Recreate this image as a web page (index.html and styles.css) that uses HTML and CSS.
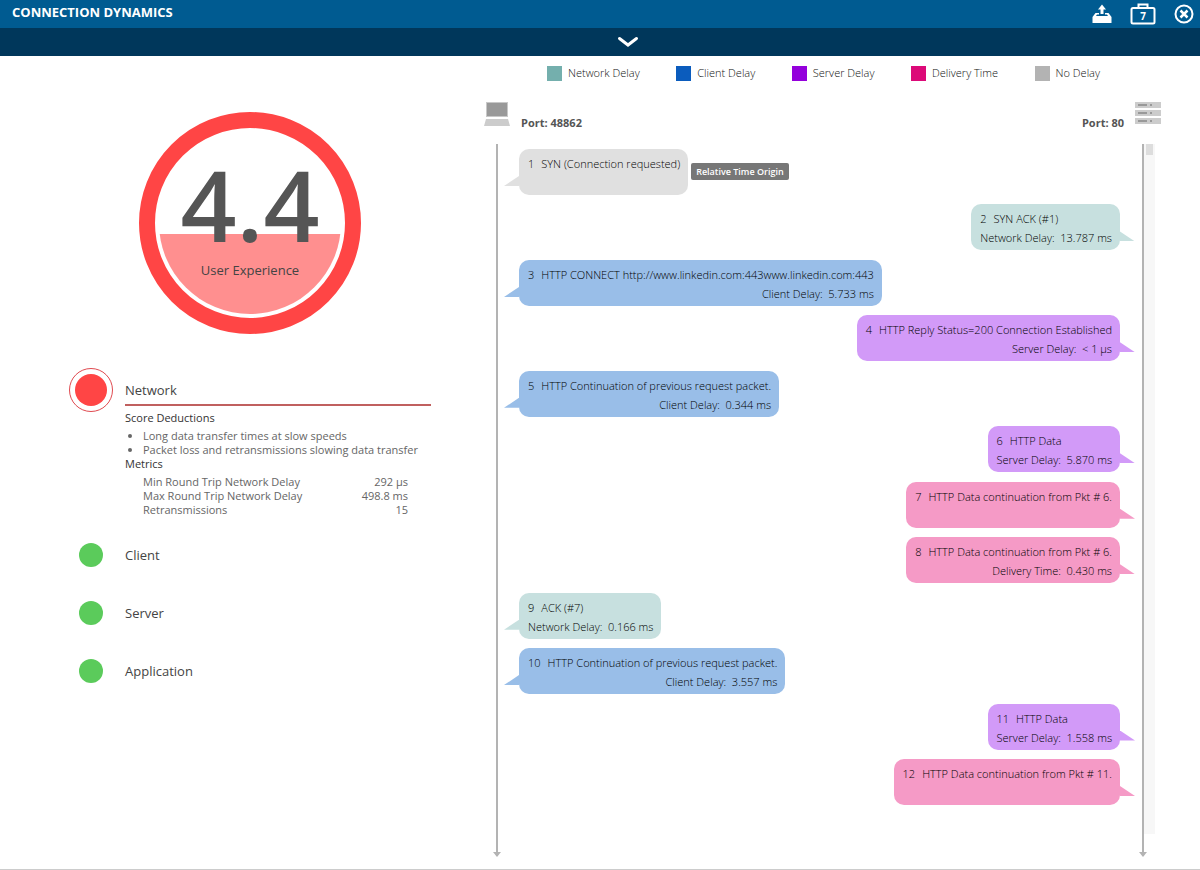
FILE: index.html
```
<!DOCTYPE html>
<html lang="en">
<head>
    <meta charset="UTF-8">
    <meta name="viewport" content="width=device-width, initial-scale=1.0">
    <title>Connection Dynamics</title>
    <link rel="stylesheet" href="styles.css">
</head>
<body>
    <header class="topbar">
        <h1>CONNECTION DYNAMICS</h1>
        <div class="actions">
            <button type="button" aria-label="Export">
                <svg width="20" height="20" viewBox="0 0 20 20">
                    <path d="M10 0.500 L14 5.500 H11.500 V10 H8.500 V5.500 H6 Z" fill="#fff"/>
                    <path d="M3.500 9 H7 V10.500 H5 L4 12 H16 L15 10.500 H13 V9 H16.500 L19.500 13 V19 H0.500 V13 Z" fill="#fff"/>
                </svg>
            </button>
            <button type="button" class="packets" aria-label="Packets">
                <svg width="26" height="22" viewBox="0 0 26 22">
                    <rect x="1.500" y="5" width="23" height="15.500" rx="1.500" fill="none" stroke="#fff" stroke-width="2"/>
                    <path d="M8.500 5 V1.500 H17.500 V5" fill="none" stroke="#fff" stroke-width="2"/>
                </svg>
                <span>7</span>
            </button>
            <button type="button" aria-label="Close">
                <svg width="20" height="20" viewBox="0 0 20 20">
                    <circle cx="10" cy="10" r="8.500" fill="none" stroke="#fff" stroke-width="2"/>
                    <path d="M6.500 6.500 L13.500 13.500 M13.500 6.500 L6.500 13.500" stroke="#fff" stroke-width="2.500"/>
                </svg>
            </button>
        </div>
    </header>
    <div class="subbar">
        <button type="button" aria-label="Expand">
            <svg width="22" height="12" viewBox="0 0 22 12">
                <path d="M2.500 2.500 L11 9 L19.500 2.500" fill="none" stroke="#fff" stroke-width="3" stroke-linecap="round"/>
            </svg>
        </button>
    </div>

    <main>
        <section class="summary">
            <div class="gauge">
                <div class="gauge-fill">
                    <div class="score">4.4</div>
                    <div class="score-label">User Experience</div>
                </div>
            </div>

            <div class="category active">
                <span class="dot red"></span>
                <div class="details">
                    <h2>Network</h2>
                    <h3>Score Deductions</h3>
                    <ul>
                        <li>Long data transfer times at slow speeds</li>
                        <li>Packet loss and retransmissions slowing data transfer</li>
                    </ul>
                    <h3>Metrics</h3>
                    <table>
                        <tr><td>Min Round Trip Network Delay</td><td>292 µs</td></tr>
                        <tr><td>Max Round Trip Network Delay</td><td>498.8 ms</td></tr>
                        <tr><td>Retransmissions</td><td>15</td></tr>
                    </table>
                </div>
            </div>
            <div class="category"><span class="dot"></span><h2>Client</h2></div>
            <div class="category"><span class="dot"></span><h2>Server</h2></div>
            <div class="category"><span class="dot"></span><h2>Application</h2></div>
        </section>

        <section class="flow">
            <ul class="legend">
                <li><i class="key-network"></i>Network Delay</li>
                <li><i class="key-client"></i>Client Delay</li>
                <li><i class="key-server"></i>Server Delay</li>
                <li><i class="key-delivery"></i>Delivery Time</li>
                <li><i class="key-none"></i>No Delay</li>
            </ul>

            <div class="ports">
                <svg width="26" height="26" viewBox="0 0 26 26">
                    <rect x="2" y="1" width="22" height="15" fill="#c8c8c8"/>
                    <rect x="3" y="2" width="20" height="13" fill="#999"/>
                    <path d="M2 18 H24 L26 25 H0 Z" fill="#ccc"/>
                </svg>
                <span>Port: 48862</span>
                <span class="port-right">Port: 80</span>
                <svg width="26" height="26" viewBox="0 0 26 26">
                    <path d="M0 1 H26 V7 H0 Z M0 9 H26 V15 H0 Z M0 17 H26 V23 H0 Z" fill="#ccc"/>
                    <path d="M3 4 H12 M15 4 H17 M3 12 H12 M15 12 H17 M3 20 H12 M15 20 H17" stroke="#999" stroke-width="2"/>
                </svg>
            </div>

            <div class="timeline">
                <div class="rail"></div>
                <ol class="packets-list">
                    <li class="packet none"><p><b>1</b>SYN (Connection requested)</p><span class="origin">Relative Time Origin</span></li>
                    <li class="packet network right"><p><b>2</b>SYN ACK (#1)</p><p class="delay">Network Delay: &nbsp;13.787 ms</p></li>
                    <li class="packet client"><p><b>3</b>HTTP CONNECT http://www.linkedin.com:443www.linkedin.com:443</p><p class="delay">Client Delay: &nbsp;5.733 ms</p></li>
                    <li class="packet server right"><p><b>4</b>HTTP Reply Status=200 Connection Established</p><p class="delay">Server Delay: &nbsp;&lt; 1 µs</p></li>
                    <li class="packet client"><p><b>5</b>HTTP Continuation of previous request packet.</p><p class="delay">Client Delay: &nbsp;0.344 ms</p></li>
                    <li class="packet server right"><p><b>6</b>HTTP Data</p><p class="delay">Server Delay: &nbsp;5.870 ms</p></li>
                    <li class="packet delivery right"><p><b>7</b>HTTP Data continuation from Pkt # 6.</p></li>
                    <li class="packet delivery right"><p><b>8</b>HTTP Data continuation from Pkt # 6.</p><p class="delay">Delivery Time: &nbsp;0.430 ms</p></li>
                    <li class="packet network"><p><b>9</b>ACK (#7)</p><p class="delay">Network Delay: &nbsp;0.166 ms</p></li>
                    <li class="packet client"><p><b>10</b>HTTP Continuation of previous request packet.</p><p class="delay">Client Delay: &nbsp;3.557 ms</p></li>
                    <li class="packet server right"><p><b>11</b>HTTP Data</p><p class="delay">Server Delay: &nbsp;1.558 ms</p></li>
                    <li class="packet delivery right"><p><b>12</b>HTTP Data continuation from Pkt # 11.</p></li>
                </ol>
                <div class="rail"></div>
                <div class="scroll"><div class="thumb"></div></div>
            </div>
        </section>
    </main>
</body>
</html>
```
FILE: styles.css
```
* {
    box-sizing: border-box;
}
body {
    margin: 0;
    min-height: 100vh;
    display: flex;
    flex-direction: column;
    font-family: "Open Sans", sans-serif;
    color: #444;
    background-color: white;
}
h1, h2, h3, p, ul, ol {
    margin: 0;
    padding: 0;
}
ol, .legend {
    list-style: none;
}
button {
    display: flex;
    padding: 0;
    border: 0;
    background: none;
}
.topbar {
    display: flex;
    justify-content: space-between;
    align-items: center;
    height: 28px;
    padding: 0 6px 0 12px;
    background-color: #005b91;
}
.topbar h1 {
    font-size: 13px;
    line-height: 24px;
    padding-bottom: 4px;
    color: white;
}
.actions {
    display: flex;
    align-items: center;
    gap: 18px;
}
.packets {
    position: relative;
}
.packets span {
    position: absolute;
    top: 6px;
    left: 0;
    width: 100%;
    text-align: center;
    font: bold 10px/14px "Open Sans", sans-serif;
    color: white;
}
.subbar {
    display: flex;
    justify-content: center;
    align-items: center;
    height: 28px;
    padding-left: 56px;
    background-color: #00375b;
}
main {
    flex: 1;
    display: grid;
    grid-template-columns: 2fr 3fr;
    border-bottom: 1px solid #ccc;
}

/* left side */
.summary {
    padding: 56px 48px 0 69px;
}
.gauge {
    width: 222px;
    height: 222px;
    margin: 0 0 34px 70px;
    padding: 4px;
    border: 16px solid #ff4545;
    border-radius: 50%;
}
.gauge-fill {
    height: 100%;
    border-radius: 50%;
    text-align: center;
    background: linear-gradient(white 102px, #ff8f8f 102px);
    padding-top: 16px;
}
.score {
    font-size: 98px;
    font-weight: 600;
    line-height: 112px;
    color: #555;
}
.score-label {
    font-size: 13px;
    line-height: 20px;
}
.category {
    display: flex;
    align-items: center;
    gap: 12px;
    height: 44px;
    margin-bottom: 14px;
}
.category.active {
    align-items: flex-start;
    height: auto;
    margin-bottom: 16px;
}
.category h2 {
    font-size: 13px;
    font-weight: 500;
    line-height: 20px;
}
.dot {
    width: 24px;
    height: 24px;
    margin: 0 10px;
    border-radius: 50%;
    background-color: #5bcb5b;
}
.dot.red {
    width: 44px;
    height: 44px;
    margin: 0;
    border: 1px solid #e04a50;
    padding: 5px;
    background-color: #ff4545;
    background-clip: content-box;
}
.details {
    flex: 1;
    max-width: 306px;
    font-size: 11px;
    line-height: 14px;
    color: #666;
}
.details h2 {
    padding: 12px 0 4px;
    border-bottom: 2px solid #c0605f;
    color: #444;
}
.details h3 {
    font-size: 11px;
    font-weight: 500;
    line-height: 14px;
    color: #333;
}
.details h2 + h3 {
    padding: 5px 0 4px;
}
.details ul {
    padding-left: 18px;
}
.details table {
    width: 265px;
    margin: 4px 0 0 18px;
    border-collapse: collapse;
}
.details td {
    padding: 0;
}
.details td:last-child {
    text-align: right;
}

/* right side */
.flow {
    display: flex;
    flex-direction: column;
    padding: 8px 39px 13px 4px;
}
.legend {
    display: flex;
    justify-content: space-between;
    padding: 0 61px 0 63px;
    font-size: 11px;
    font-weight: 300;
    line-height: 18px;
    color: #111;
}
.legend li {
    display: flex;
    align-items: center;
    gap: 6px;
}
.legend i {
    width: 15px;
    height: 15px;
}
.key-network { background-color: #74afad; }
.key-client { background-color: #0b5cbd; }
.key-server { background-color: #9400dc; }
.key-delivery { background-color: #dc0a78; }
.key-none { background-color: #b3b3b3; }
.ports {
    display: flex;
    gap: 11px;
    height: 62px;
    padding-top: 19px;
    font-size: 11px;
    font-weight: 700;
    color: #555;
}
.ports span {
    padding-top: 14px;
    line-height: 15px;
}
.port-right {
    margin-left: auto;
}
.timeline {
    flex: 1;
    display: flex;
    margin: 0 6px 0 12px;
}
.rail {
    position: relative;
    width: 2px;
    background-color: #b3b3b3;
}
.rail::after {
    content: "";
    position: absolute;
    left: -3px;
    bottom: -1px;
    border: 4px solid transparent;
    border-top: 5px solid #b3b3b3;
    border-bottom: 0;
}
.packets-list {
    flex: 1;
    display: flex;
    flex-direction: column;
    justify-content: space-between;
    align-items: flex-start;
    padding: 5px 22px 51px 21px;
}
.packet {
    position: relative;
    height: 46px;
    padding: 5px 8px 5px 9px;
    border-radius: 10px;
    font-size: 11px;
    font-weight: 300;
    line-height: 19px;
    color: #000;
    white-space: nowrap;
    background-color: var(--fill);
}
.packet b {
    font-weight: 300;
    margin-right: 7px;
}
.packet::before {
    content: "";
    position: absolute;
    top: 27px;
    left: -15px;
    width: 15px;
    height: 10px;
    background-color: var(--fill);
    clip-path: polygon(0 100%, 100% 0, 100% 100%);
}
.packet.right {
    align-self: flex-end;
}
.packet.right::before {
    left: auto;
    right: -15px;
    clip-path: polygon(0 0, 100% 100%, 0 100%);
}
.delay {
    text-align: right;
}
.none { --fill: #e0e0e0; }
.network { --fill: #c7e0df; }
.client { --fill: #99bee8; }
.server { --fill: #d29af8; }
.delivery { --fill: #f59ac6; }
.origin {
    position: absolute;
    left: 100%;
    top: 14px;
    margin-left: 3px;
    padding: 0 5px;
    border-radius: 2px;
    font-size: 9px;
    font-weight: 600;
    line-height: 17px;
    color: white;
    background-color: #777;
}
.scroll {
    width: 11px;
    margin-bottom: 22px;
    padding-left: 2px;
    background-color: #f7f7f7;
}
.thumb {
    width: 7px;
    height: 11px;
    background-color: #ddd;
}
```
